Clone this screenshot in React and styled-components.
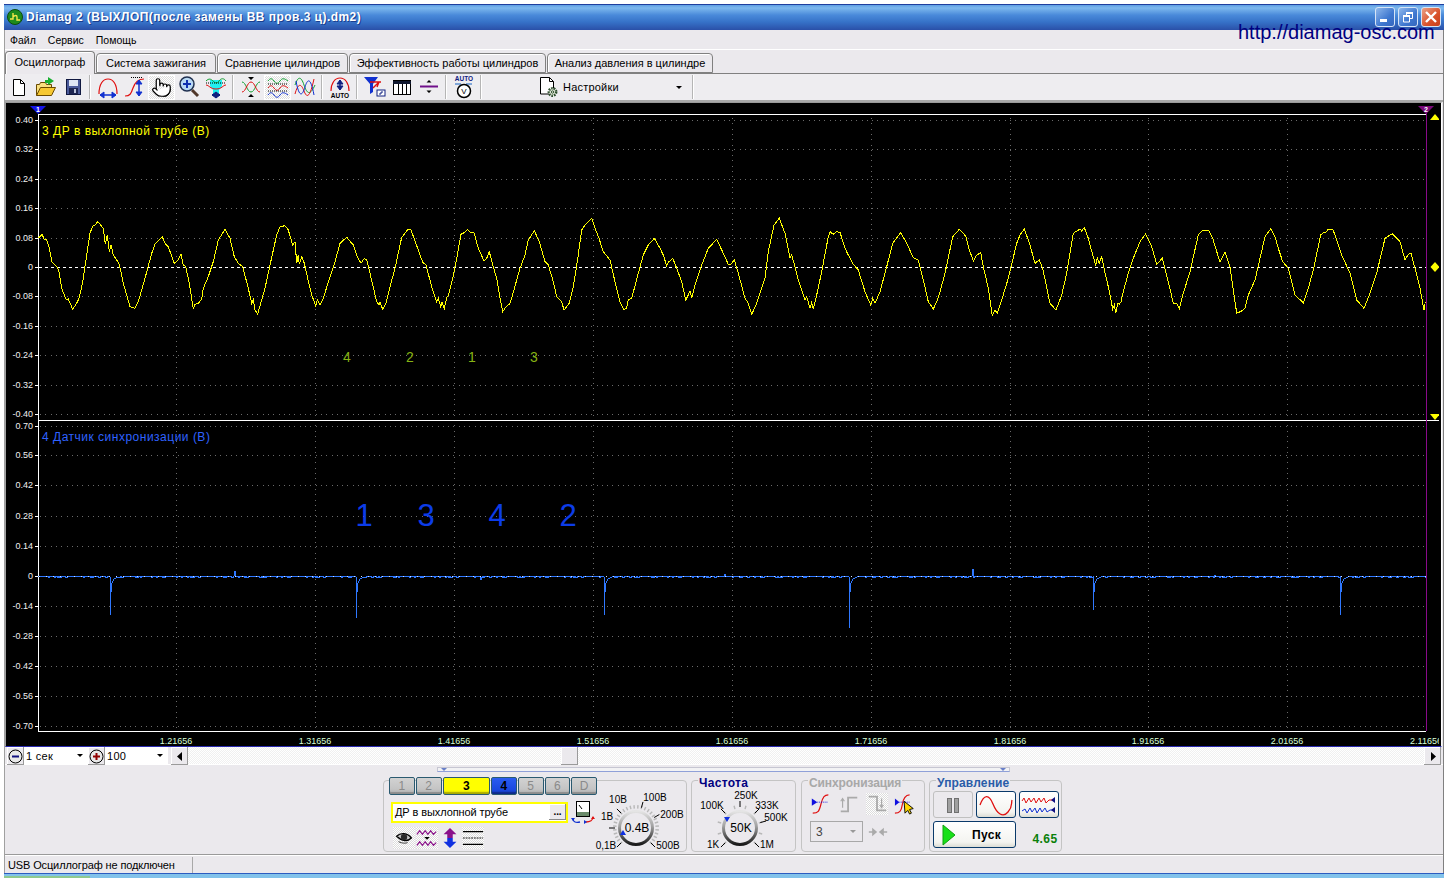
import styled, { createGlobalStyle } from "styled-components";
import { Pointer } from "lucide-react";

const GlobalStyle = createGlobalStyle`
  html, body {
    margin: 0;
    padding: 0;
    background: #fff;
  }
  * {
    box-sizing: border-box;
  }
  body {
    font-family: "Liberation Sans", Arial, sans-serif;
    font-size: 11px;
    color: #000;
  }
`;

const Page = styled.div`
  width: 1448px;
  height: 878px;
  padding: 4px 4px 0;
  display: flex;
  flex-direction: column;
  background: #fff;
  overflow: hidden;
`;

const Window = styled.div`
  position: relative;
  flex: 1;
  min-height: 0;
  display: flex;
  flex-direction: column;
  background: #ebe9ed;
  border-right: 1px solid #808080;
  border-left: 1px solid #a0a0a0;
`;

const TitleBar = styled.div`
  height: 26px;
  margin: 0 -1px;
  flex: none;
  display: flex;
  align-items: center;
  padding: 0 3px 1px 3px;
  border-top: 1px solid #1f3f9e;
  background: linear-gradient(#5f9fe4 0, #7db8ee 3px, #4a8ada 10px, #3672c8 17px, #2a50a8 25px);
`;

const TitleText = styled.span`
  margin-left: 3px;
  color: #fff;
  font-weight: bold;
  font-size: 12px;
  letter-spacing: 0.46px;
  text-shadow: 1px 1px 0 #1a3f8f;
`;

const WindowButtons = styled.div`
  margin-left: auto;
  display: flex;
  gap: 3px;
`;

const WindowButton = styled.div`
  width: 20px;
  height: 20px;
  display: flex;
  align-items: center;
  justify-content: center;
  border: 1px solid #d6e4f6;
  border-radius: 3px;
  background: ${(p) =>
    p.$close
      ? "linear-gradient(135deg, #eba187, #d9512a 60%, #c8401c)"
      : "linear-gradient(135deg, #8fb8ec, #3f78d0 60%, #3567bd)"};
`;

const UrlLabel = styled.div`
  position: absolute;
  top: 17px;
  left: 1233px;
  color: #000080;
  font-size: 20px;
  white-space: nowrap;
`;

const MenuBar = styled.div`
  height: 20px;
  flex: none;
  display: flex;
  align-items: center;
  gap: 12px;
  padding-left: 5px;
  border-bottom: 1px solid #fff;
`;

const MenuItem = styled.span`
  font-size: 10.5px;
`;

const TabRow = styled.div`
  height: 24px;
  flex: none;
  display: flex;
  align-items: flex-end;
  gap: 1px;
  border-bottom: 1px solid #808080;
`;

const Tab = styled.div`
  height: ${(p) => (p.$active ? "23px" : "20px")};
  width: ${(p) => p.$w}px;
  margin-bottom: ${(p) => (p.$active ? "-1px" : "0")};
  padding-bottom: ${(p) => (p.$active ? "2px" : "1px")};
  display: flex;
  align-items: center;
  justify-content: center;
  border: 1px solid #808080;
  border-bottom: ${(p) => (p.$active ? "none" : "1px solid #808080")};
  border-radius: 4px 4px 0 0;
  background: #ebe9ed;
  box-shadow: inset 1px 1px 0 #fff;
  font-size: 11px;
  white-space: nowrap;
  position: relative;
`;

const Toolbar = styled.div`
  height: 28px;
  flex: none;
  display: flex;
  align-items: center;
  background: #eeedf0;
  border-bottom: 2px solid #a8a8a8;
`;

const ToolButton = styled.div`
  width: 27px;
  height: 25px;
  display: flex;
  align-items: center;
  justify-content: center;
  border: 1px solid ${(p) => (p.$on ? "#fff" : "transparent")};
  background: ${(p) =>
    p.$on ? "repeating-conic-gradient(#dcdcdc 0 25%, #fff 0 50%) 0 0/2px 2px" : "transparent"};
`;

const ToolSep = styled.div`
  width: 1px;
  height: 24px;
  flex: none;
  margin: 0 4px 0 3px;
  background: #b5b5b5;
  box-shadow: 1px 0 0 #fff;
`;

const SettingsBox = styled.div`
  width: 152px;
  margin-left: 52px;
  display: flex;
  align-items: center;
  gap: 2px;
  font-size: 11px;
  letter-spacing: 0.2px;
`;

const DownArrow = styled.span`
  width: 0;
  height: 0;
  margin-left: auto;
  margin-right: ${(p) => p.$mr || 7}px;
  border-left: 3px solid transparent;
  border-right: 3px solid transparent;
  border-top: 3px solid ${(p) => p.$color || "#000"};
`;

const Scope = styled.div`
  height: 645px;
  flex: none;
  margin: 0 1px 0 0;
  display: flex;
  flex-direction: column;
  background: #000;
  border-top: 1px solid #9a9a9a;
  border-left: 1px solid #a0a0a0;
  border-right: 1px solid #fff;
  border-bottom: 1px solid #2a2ab0;
`;

const ScopeSvg = styled.svg`
  display: block;
  flex: none;
  font-family: "Liberation Sans", Arial, sans-serif;
`;

const ScrollRow = styled.div`
  height: 18px;
  flex: none;
  display: flex;
  padding: 0 2px;
  border-bottom: 1px solid #fff;
`;

const RoundBtn = styled.div`
  width: 17px;
  height: 18px;
  flex: none;
  display: flex;
  align-items: center;
  justify-content: center;
  background: #ebe9ed;
  box-shadow: inset -1px -1px 0 #9a9a9a, inset 1px 1px 0 #fff;
`;

const ZoomCombo = styled.div`
  width: ${(p) => p.$w}px;
  display: flex;
  align-items: center;
  padding-left: 2px;
  background: #fff;
  font-size: 11px;
  letter-spacing: 0.3px;
`;

const ScrollTrack = styled.div`
  position: relative;
  flex: 1;
  margin-left: 3px;
  display: flex;
  justify-content: space-between;
  background: repeating-conic-gradient(#f0f0f0 0 25%, #fff 0 50%) 0 0/2px 2px;
`;

const ScrollThumb = styled.div`
  position: absolute;
  top: 0;
  left: 390px;
  width: 17px;
  height: 18px;
  background: #ebe9ed;
  box-shadow: inset -1px -1px 0 #9a9a9a, inset 1px 1px 0 #fff;
`;

const GripBar = styled.div`
  position: relative;
  width: 573px;
  height: 5px;
  flex: none;
  margin: 2px 0 0 432px;
  border: 1px solid #c6c6d2;
  border-bottom-color: #8fa0d8;
  background: #f2f2f4;
  &::before,
  &::after {
    content: "";
    position: absolute;
    top: 0;
    border-top: 3px solid #6a80c8;
    border-left: 3px solid transparent;
    border-right: 3px solid transparent;
  }
  &::before {
    left: 3px;
  }
  &::after {
    right: 3px;
  }
`;

const ControlsArea = styled.div`
  flex: 1;
  min-height: 0;
  display: flex;
  align-items: flex-end;
  gap: 4px;
  padding: 0 0 2px 378px;
`;

const Panel = styled.div`
  position: relative;
  width: ${(p) => p.$w}px;
  height: 72px;
  flex: none;
  display: flex;
  margin-left: ${(p) => p.$ml || 0}px;
  border: 1px solid #c4c4c4;
  border-radius: 4px;
  background: #ebe9ed;
`;

const Legend = styled.div`
  position: absolute;
  top: -4px;
  left: 6px;
  padding: 0 1px;
  background: #ebe9ed;
  font-size: 12px;
  line-height: 13px;
  font-weight: bold;
  letter-spacing: ${(p) => p.$ls ?? 0.3}px;
  color: ${(p) => p.$color};
`;

const ChannelColumn = styled.div`
  width: 208px;
  flex: none;
  margin-left: 5px;
  display: flex;
  flex-direction: column;
`;

const ChannelTabs = styled.div`
  margin-top: -4px;
  display: flex;
  gap: 1px;
`;

const ChannelBtn = styled.div`
  width: ${(p) => (p.$wide ? 48 : 26)}px;
  height: 18px;
  display: flex;
  align-items: center;
  justify-content: center;
  border: 1px solid #2a5a70;
  border-radius: 2px;
  font-size: 12px;
  font-weight: ${(p) => (p.$bg ? "bold" : "normal")};
  color: ${(p) => (p.$bg ? "#000" : "#8a8a8a")};
  background: ${(p) => p.$bg || "linear-gradient(#d2d2d2, #c4c4c4 70%, #a8a8a8)"};
  box-shadow: inset 0 -2px 0 rgba(0, 0, 0, 0.18);
`;

const NameRow = styled.div`
  margin: 5px 0 0 2px;
  display: flex;
  align-items: center;
  gap: 3px;
`;

const NameField = styled.div`
  width: 177px;
  height: 21px;
  display: flex;
  align-items: center;
  padding-left: 2px;
  border: 2px solid #ffff00;
  background: #fff;
  font-size: 11px;
  letter-spacing: -0.1px;
`;

const DotsBtn = styled.div`
  width: 17px;
  height: 16px;
  margin-left: auto;
  display: flex;
  align-items: center;
  justify-content: center;
  background: #ebe9ed;
  box-shadow: inset -1px -1px 0 #8a8a8a, inset 1px 1px 0 #fff;
  font-size: 10px;
  font-weight: bold;
  line-height: 8px;
`;

const ViewRow = styled.div`
  margin: 3px 0 0 4px;
  display: flex;
  gap: 1px;
`;

const ViewBtn = styled.div`
  width: 22px;
  height: 22px;
  display: flex;
  align-items: center;
  justify-content: center;
  background: ${(p) =>
    p.$on ? "repeating-conic-gradient(#dcdcdc 0 25%, #fff 0 50%) 0 0/2px 2px" : "transparent"};
`;

const KnobSvg = styled.svg`
  display: block;
  flex: none;
  align-self: flex-end;
  margin-bottom: -1px;
  overflow: visible;
  font-family: "Liberation Sans", Arial, sans-serif;
`;

const SyncGrid = styled.div`
  padding: 12px 0 0 8px;
  display: flex;
  flex-direction: column;
  gap: 6px;
`;

const SyncIcons = styled.div`
  display: flex;
  gap: 6px;
`;

const SyncBtn = styled.div`
  width: 22px;
  height: 22px;
  display: flex;
  align-items: center;
  justify-content: center;
  background: ${(p) =>
    p.$on ? "repeating-conic-gradient(#dcdcdc 0 25%, #fff 0 50%) 0 0/2px 2px" : "transparent"};
`;

const SyncRow = styled.div`
  display: flex;
  align-items: center;
  gap: 5px;
`;

const SyncSelect = styled.div`
  width: 53px;
  height: 21px;
  display: flex;
  align-items: center;
  padding-left: 5px;
  border: 1px solid #a8a8a8;
  font-size: 12px;
  color: #444;
`;

const ControlGrid = styled.div`
  padding: 10px 0 0 3px;
  display: grid;
  grid-template-columns: 40px 40px 40px;
  grid-template-rows: 27px 27px;
  gap: 3px;
`;

const CtlBtn = styled.div`
  display: flex;
  align-items: center;
  justify-content: center;
  border: ${(p) => (p.$off ? "1px solid #c0c0c0" : "1px solid #0a3a6a")};
  border-radius: 3px;
  background: ${(p) => (p.$off ? "#ebe9ed" : "linear-gradient(#fff, #f4f4f0 80%, #dcdcd4)")};
`;

const StartBtn = styled(CtlBtn)`
  grid-column: span 2;
  justify-content: flex-start;
  padding-left: 8px;
`;

const StartLabel = styled.span`
  margin-left: 16px;
  font-size: 12px;
  font-weight: bold;
  letter-spacing: 0.4px;
`;

const Voltage = styled.div`
  display: flex;
  align-items: center;
  justify-content: center;
  padding: 8px 0 0 12px;
  color: #0a800a;
  font-size: 12px;
  font-weight: bold;
  letter-spacing: 0.4px;
`;

const StatusBar = styled.div`
  height: 19px;
  flex: none;
  display: flex;
  gap: 3px;
  border-top: 1px solid #9a9a9a;
  box-shadow: inset 0 1px 0 #fff;
  padding-top: 2px;
`;

const StatusCell = styled.div`
  width: ${(p) => p.$w}px;
  display: flex;
  align-items: center;
  padding-left: 3px;
  border-right: 1px solid #a8a8a8;
  font-size: 11px;
  letter-spacing: -0.13px;
`;

const Taskbar = styled.div`
  position: relative;
  height: 5px;
  flex: none;
  border-top: 1px solid #2c5cc0;
  background: #82c2ea;
`;

const StartEdge = styled.div`
  position: absolute;
  left: 0;
  bottom: 0;
  width: 86px;
  height: 2px;
  background: #8fc98f;
`;

// точки снятые с осциллограммы, [начало участка, предел, x*3 y*3]
const TRACE_PARTS = [
  [30, 1410, "25,100 36,88 43,103 50,104 58,130 66,170 72,178 80,184 87,200 95,250 108,283 115,282 128,313 140,295 148,278 158,230 170,150 180,85 188,63 195,60 203,50 210,58 220,70 226,118 232,90 238,140 243,120 250,150 258,162 268,178 280,235 300,305 315,310 325,290 345,220 365,145 375,118 385,108 397,95 405,115 415,125 433,175 442,168 453,148 460,180 467,185 478,235 490,312 495,298 505,295 515,283 520,250 535,215 550,170 565,105 585,73 600,100 613,155 625,175 638,185 655,250 665,295 670,285 675,315 683,327 695,285 705,250 720,180 740,90 750,65 765,62 775,75 788,120 795,110 800,175 805,150 808,178 815,155 823,175 832,215 845,270 857,302 862,285 870,300 880,280 900,215 915,170 930,115 950,97 970,120 982,155 993,175 1003,160 1010,165 1020,205 1040,290 1047,300 1050,292 1058,313 1068,295 1080,245 1095,190 1115,97 1125,85 1135,72 1143,75 1152,100 1165,135 1178,172 1188,180 1205,245 1220,290 1225,280 1232,305 1236,292 1243,310 1250,278 1255,272 1270,212 1280,160 1293,88 1305,82 1313,73 1320,82 1332,83 1345,130 1362,168 1370,160 1378,140 1388,180 1400,220"],
  [500, 1378, "0,278 8,320 15,310 30,295 40,262 60,190 75,150 85,105 103,77 118,110 135,170 145,180 160,230 170,275 185,290 192,315 208,295 220,245 232,170 245,75 255,60 265,50 275,40 285,70 297,100 310,140 330,165 345,230 360,290 372,315 380,308 385,285 395,280 415,205 430,150 445,120 463,100 480,130 490,150 500,183 505,172 518,160 530,190 545,230 557,285 565,270 570,258 575,280 585,240 605,180 625,130 650,103 670,145 685,178 693,178 703,165 715,205 735,280 745,295 755,328 770,295 780,265 795,220 805,140 822,60 838,40 855,85 870,160 875,150 882,175 895,225 915,285 920,275 930,310 935,292 940,312 950,270 965,200 985,95 990,80 1000,88 1010,80 1020,82 1035,130 1045,150 1060,178 1075,195 1095,260 1112,300 1118,280 1125,295 1140,260 1160,185 1178,115 1202,83 1220,115 1240,158 1255,165 1270,225 1285,290 1300,312 1310,290 1320,260 1335,205 1358,95 1378,73"],
  [960, 9999, "10,85 18,95 25,125 40,168 50,150 62,143 70,185 85,250 97,332 105,315 112,325 122,295 145,220 170,115 180,90 193,73 207,110 225,175 238,165 248,190 270,295 288,315 305,270 320,205 340,85 360,72 365,78 373,68 385,100 398,150 407,180 412,160 418,175 425,155 432,190 445,245 458,312 463,300 467,325 473,295 478,298 483,290 490,260 505,205 520,160 540,110 557,87 575,125 590,178 607,160 625,230 640,295 650,295 658,312 670,265 690,200 715,90 730,75 745,75 758,100 780,172 795,140 810,185 830,325 845,318 855,310 865,270 885,225 915,95 932,72 945,95 955,130 968,170 985,190 1005,270 1030,293 1045,250 1060,195 1082,90 1090,83 1100,80 1105,72 1118,72 1125,90 1145,150 1170,205 1190,285 1212,310 1230,265 1250,205 1275,100 1297,86 1320,110 1335,165 1345,148 1353,145 1365,190 1380,250 1392,315 1396,290"],
];

const yellowTrace = TRACE_PARTS.flatMap(([x0, limit, s]) =>
  s
    .split(" ")
    .map((p) => p.split(",").map(Number))
    .filter(([zx]) => zx <= limit)
    .map(([zx, zy]) => `${(x0 + zx / 3).toFixed(1)},${(205 + zy / 3).toFixed(1)}`)
).join(" ");

// датчик синхронизации: ровная линия с короткими провалами
const SPIKES = [
  [110, 615],
  [356, 618],
  [604, 615],
  [849, 628],
  [1093, 610],
  [1340, 615],
];
const BUMPS = { 235: 571, 481: 580, 725: 574, 973: 569, 1215: 575 };

const makeBlueTrace = () => {
  const pts = [];
  let seed = 7;
  for (let x = 38; x <= 1426; x += 1) {
    seed = (seed * 137 + 11) % 251;
    const spike = SPIKES.find(([sx]) => sx === x);
    if (spike) {
      pts.push(`${x},577`, `${x},${spike[1]}`, `${x + 1},592`, `${x + 2},583`, `${x + 4},579`, `${x + 8},577`);
      x += 8;
      continue;
    }
    pts.push(`${x},${BUMPS[x] || 576.5 + (seed % 5 === 0 ? 1 : 0)}`);
  }
  return pts.join(" ");
};

const V_GRID = [176, 315, 454, 593, 732, 871, 1010, 1148, 1287];
const TIME_LABELS = [
  "1.21656", "1.31656", "1.41656", "1.51656", "1.61656", "1.71656", "1.81656", "1.91656", "2.01656",
];

const CH1_TICKS = [
  ["0.40", 120], ["0.32", 149], ["0.24", 179], ["0.16", 208], ["0.08", 238], ["0", 267],
  ["-0.08", 296], ["-0.16", 326], ["-0.24", 355], ["-0.32", 385], ["-0.40", 414],
];
const CH2_TICKS = [
  ["0.70", 426], ["0.56", 455], ["0.42", 485], ["0.28", 516], ["0.14", 546], ["0", 576],
  ["-0.14", 606], ["-0.28", 636], ["-0.42", 666], ["-0.56", 696], ["-0.70", 726],
];

const Grid = ({ ticks, top, bottom, zeroDash }) => (
  <g shapeRendering="crispEdges">
    {ticks.map(([label, y]) => (
      <g key={label}>
        <line x1="35" x2="38" y1={y} y2={y} stroke="#fff" />
        <text x="33" y={y + 3} textAnchor="end" fontSize="9" fill="#f0f0f0">
          {label}
        </text>
        {label === "0" ? (
          zeroDash && <line x1="39" x2="1426" y1={y} y2={y} stroke="#fff" strokeDasharray="3 3" />
        ) : (
          <line x1="40" x2="1426" y1={y} y2={y} stroke="#6a6a6a" strokeDasharray="1 4.3" />
        )}
      </g>
    ))}
    {V_GRID.map((x) => (
      <line key={x} x1={x} x2={x} y1={top} y2={bottom} stroke="#6a6a6a" strokeDasharray="1 4.3" />
    ))}
  </g>
);

const CursorFlag = ({ x, color, n }) => (
  <g>
    <polygon points={`${x - 8},106 ${x + 8},106 ${x},114`} fill={color} />
    <text x={x} y="112" textAnchor="middle" fontSize="7" fontWeight="bold" fill="#fff">
      {n}
    </text>
  </g>
);

const Channel1 = () => (
  <ScopeSvg width="1433" height="317" viewBox="6 103 1433 317">
    <Grid ticks={CH1_TICKS} top={118} bottom={420} zeroDash />
    <g shapeRendering="crispEdges">
      <line x1="38" x2="1426" y1="114.5" y2="114.5" stroke="#fff" />
      <line x1="38.5" x2="38.5" y1="114" y2="420" stroke="#fff" />
      <line x1="1426.5" x2="1426.5" y1="112" y2="420" stroke="#8a0a8a" />
      <polyline points={yellowTrace} fill="none" stroke="#ffff00" strokeWidth="1" />
    </g>
    <CursorFlag x={38} color="#1414e6" n="1" />
    <CursorFlag x={1426} color="#7a0a7a" n="2" />
    <polygon points="1430,120 1440,120 1435,114" fill="#ffff00" />
    <polygon points="1435,262 1439.5,267 1435,272 1430.5,267" fill="#ffff00" />
    <polygon points="1430,414 1440,414 1435,420" fill="#ffff00" />
    <text x="42" y="135" fontSize="12" letterSpacing="0.5" fill="#ffff00">
      3 ДР в выхлопной трубе (В)
    </text>
    {[["4", 347], ["2", 410], ["1", 472], ["3", 534]].map(([n, x]) => (
      <text key={x} x={x} y="362" textAnchor="middle" fontSize="14" fill="#86b414">
        {n}
      </text>
    ))}
  </ScopeSvg>
);

const Channel2 = () => (
  <ScopeSvg width="1433" height="312" viewBox="6 420 1433 312">
    <Grid ticks={CH2_TICKS} top={420} bottom={731} />
    <g shapeRendering="crispEdges">
      <line x1="38" x2="1440" y1="420.5" y2="420.5" stroke="#fff" />
      <line x1="38.5" x2="38.5" y1="420" y2="731" stroke="#fff" />
      <line x1="38" x2="1426" y1="731.5" y2="731.5" stroke="#fff" />
      <line x1="1426.5" x2="1426.5" y1="420" y2="731" stroke="#8a0a8a" />
      <polyline points={makeBlueTrace()} fill="none" stroke="#2f78ff" strokeWidth="1" />
      <line x1="39" x2="1426" y1="576.500" y2="576.500" stroke="#cfe0ff" strokeDasharray="1 6" />
    </g>
    <text x="42" y="441" fontSize="12" letterSpacing="0.5" fill="#2f62ff">
      4 Датчик синхронизации (В)
    </text>
    {[["1", 364], ["3", 426], ["4", 497], ["2", 568]].map(([n, x]) => (
      <text key={x} x={x} y="526" textAnchor="middle" fontSize="31" fill="#0c3ce8">
        {n}
      </text>
    ))}
  </ScopeSvg>
);

const TimeAxis = () => (
  <ScopeSvg width="1433" height="14" viewBox="6 732 1433 14">
    {V_GRID.map((x, i) => (
      <text key={x} x={x} y="744" textAnchor="middle" fontSize="9" fill="#d8ffd8">
        {TIME_LABELS[i]}
      </text>
    ))}
    <text x="1426" y="744" textAnchor="middle" fontSize="9" fill="#d8ffd8">
      2.11656
    </text>
  </ScopeSvg>
);

const Ico = ({ s = 24, children }) => (
  <svg width={s} height={s} viewBox="0 0 24 24" style={{ display: "block" }}>
    {children}
  </svg>
);

const ArrowH = ({ y, x1, x2, c = "#1030d0" }) => (
  <g stroke={c} fill={c}>
    <line x1={x1} x2={x2} y1={y} y2={y} strokeWidth="1.5" />
    <polygon points={`${x1},${y} ${x1 + 4},${y - 3} ${x1 + 4},${y + 3}`} />
    <polygon points={`${x2},${y} ${x2 - 4},${y - 3} ${x2 - 4},${y + 3}`} />
  </g>
);

const ArrowV = ({ x, y1, y2, c = "#1030d0" }) => (
  <g stroke={c} fill={c}>
    <line x1={x} x2={x} y1={y1} y2={y2} strokeWidth="1.5" />
    <polygon points={`${x},${y1} ${x - 3},${y1 + 4} ${x + 3},${y1 + 4}`} />
    <polygon points={`${x},${y2} ${x - 3},${y2 - 4} ${x + 3},${y2 - 4}`} />
  </g>
);

const NewIcon = () => (
  <Ico>
    <path d="M6.5 4.5h7l4 4v12h-11z" fill="#fff" stroke="#000" />
    <path d="M13.5 4.5v4h4" fill="none" stroke="#000" />
  </Ico>
);
const OpenIcon = () => (
  <Ico>
    <path d="M2.5 20.5V9.5h3l1-2h5l1 2h5v3" fill="#f8e080" stroke="#6a4a00" />
    <path d="M2.5 20.5l4-8h15l-4 8z" fill="#f6c832" stroke="#6a4a00" />
    <path d="M14 2l6 4-6 4V8h-3V5h3z" fill="#18b030" />
  </Ico>
);
const SaveIcon = () => (
  <Ico>
    <rect x="5.5" y="4.5" width="14" height="15" fill="#4a5a9a" stroke="#101840" />
    <rect x="8" y="5" width="9" height="6" fill="#dfe6f4" />
    <rect x="8" y="13" width="9" height="6" fill="#1c2450" />
    <rect x="13" y="14" width="2" height="4" fill="#b8c0d8" />
  </Ico>
);
const ArcWidthIcon = () => (
  <Ico>
    <path d="M3 19C3 9 7 4 12 4s9 5 9 15" fill="none" stroke="#e01010" strokeWidth="1.2" />
    <ArrowH y={20} x1={4} x2={20} />
  </Ico>
);
const ArcHeightIcon = () => (
  <Ico>
    <path d="M2 21c5 0 6-2 8-8s5-9 11-9" fill="none" stroke="#e01010" strokeWidth="1.2" />
    <line x1="8" x2="20" y1="2.5" y2="2.500" stroke="#000" strokeDasharray="1 1" />
    <ArrowV x={16} y1={5} y2={21} />
  </Ico>
);
const ZoomIcon = () => (
  <Ico>
    <line x1="15" y1="15" x2="21" y2="21" stroke="#50382a" strokeWidth="3" />
    <circle cx="10" cy="9" r="7" fill="#b8d8f4" stroke="#203050" strokeWidth="1.5" />
    <path d="M6 9h8M10 5v8" stroke="#1030b0" strokeWidth="2" />
  </Ico>
);
const ScaleIcon = () => (
  <Ico>
    <path d="M6 5h12v6l-3 4v6H9v-6L6 11z" fill="#22f0f0" />
    <path d="M2 6c3-3 5-2 7 0s4 3 6 0 5-3 7 0" fill="none" stroke="#10a030" />
    <path d="M2 10c3 0 4 4 10 4s7-4 10-4" fill="none" stroke="#e01010" />
    <line x1="2" x2="22" y1="8" y2="8" stroke="#000" strokeDasharray="1 1" />
    <ArrowH y={20} x1={8} x2={16} c="#102080" />
  </Ico>
);
const CrossIcon = () => (
  <Ico>
    <path d="M3 7c4 0 5 10 9 10s5-10 9-10" fill="none" stroke="#10a030" />
    <path d="M3 17c4 0 5-10 9-10s5 10 9 10" fill="none" stroke="#e01010" />
    <path d="M9 2h6l-3 3zM9 22h6l-3-3z" fill="#000" />
  </Ico>
);
const RowsIcon = () => (
  <Ico>
    <g fill="none">
      <path d="M2 6c2-3 4-3 6 0s4 3 6 0 4-3 8 0" stroke="#10a030" />
      <path d="M2 13c2-3 4-3 6 0s4 3 6 0 4-3 8 0" stroke="#e01010" />
      <path d="M2 20c2-3 4-3 6 0s4 3 6 0 4-3 8 0" stroke="#1030d0" />
    </g>
    <path d="M2 9h20M2 16h20" stroke="#000" strokeDasharray="1 1" />
  </Ico>
);
const OverlayIcon = () => (
  <Ico>
    <g fill="none">
      <path d="M2 10C5 1 8 1 11 10s6 11 11 0" stroke="#10a030" />
      <path d="M2 19C5 8 8 8 11 16s6 6 10-12" stroke="#e01010" />
      <path d="M3 6c3 16 6 16 9 6s6-8 9 8" stroke="#1030d0" />
    </g>
  </Ico>
);
const AutoIcon = () => (
  <Ico>
    <path d="M3 16C3 8 7 3 12 3s9 5 9 13" fill="none" stroke="#e01010" strokeWidth="1.2" />
    <ArrowV x={12} y1={5} y2={15} c="#102080" />
    <text x="12" y="22.5" textAnchor="middle" fontSize="6.5" fontWeight="bold" fontFamily="Liberation Sans">AUTO</text>
  </Ico>
);
const FilterIcon = () => (
  <Ico>
    <path d="M1 2h14L10 9v8l-3 2V9z" fill="#1030d0" />
    <path d="M7 7h11M10 13l6-6-2 5" fill="none" stroke="#e01010" strokeWidth="1.4" />
    <rect x="14" y="15" width="8" height="6" fill="#fff" stroke="#102080" />
    <path d="M16 19h2v-2h2" fill="none" stroke="#102080" />
  </Ico>
);
const TableIcon = () => (
  <Ico>
    <rect x="3.5" y="5.5" width="17" height="14" fill="#fff" stroke="#000" />
    <path d="M3 6h18v3H3z" fill="#101830" />
    <path d="M8.5 9v10M12.5 9v10M16.5 9v10" stroke="#000" />
  </Ico>
);
const LevelIcon = () => (
  <Ico>
    <path d="M3 11.500h18" stroke="#70108a" strokeWidth="2" />
    <path d="M9.5 7.500h5L12 5zM9.5 15.500h5L12 18z" fill="#000" />
  </Ico>
);
const GaugeIcon = () => (
  <Ico>
    <text x="12" y="6" textAnchor="middle" fontSize="6.5" fontWeight="bold" fill="#102080" fontFamily="Liberation Sans">AUTO</text>
    <path d="M3 9h18" stroke="#1060c0" strokeWidth="1.2" strokeDasharray="6 5" />
    <circle cx="12" cy="16" r="6.5" fill="#fff" stroke="#000" strokeWidth="1.5" />
    <text x="12" y="19" textAnchor="middle" fontSize="8" fontFamily="Liberation Sans">V</text>
  </Ico>
);
const SettingsIcon = () => (
  <Ico>
    <path d="M3.5 2.500h9l4 4V19h-13z" fill="#fff" stroke="#000" />
    <path d="M12.5 2.500v4h4" fill="none" stroke="#000" />
    <circle cx="15.5" cy="17" r="3.7" fill="#e8f0e0" stroke="#305030" strokeWidth="2.5" strokeDasharray="1.6 1" />
    <circle cx="15.5" cy="17" r="1.2" fill="none" stroke="#305030" />
  </Ico>
);

const MeterIcon = () => (
  <Ico>
    <rect x="5.5" y="1.500" width="13" height="15" fill="#fff" stroke="#000" />
    <path d="M8 5l3 4" stroke="#000" />
    <rect x="6" y="12" width="12" height="4" fill="#6a8a6a" />
    <path d="M2 19c0 3 3 4 7 3" fill="none" stroke="#1030d0" strokeWidth="1.3" />
    <path d="M22 17c0 3-3 5-7 5" fill="none" stroke="#e01010" strokeWidth="1.3" />
    <path d="M0 18h4l-2 3zM13 20v4l3-2z" fill="#1030d0" />
    <path d="M20 19h4l-2-3z" fill="#e01010" />
  </Ico>
);
const EyeIcon = () => (
  <Ico s={22}>
    <path d="M4 10c4-4 12-4 16 2-4 4-10 4-16-2z" fill="#c8c8c8" stroke="#000" strokeWidth="1.5" />
    <circle cx="12" cy="11" r="3.5" fill="#2a2a2a" />
    <path d="M6 16c4 2 8 2 10 1" stroke="#333" fill="none" />
  </Ico>
);
const WaveViewIcon = () => (
  <Ico s={22}>
    <path d="M1 8l3-4 3 4 3-4 3 4 3-4 3 4 3-3" fill="none" stroke="#8a108a" strokeWidth="1.3" />
    <path d="M1 20l3-4 3 4 3-4 3 4 3-4 3 4 3-3" fill="none" stroke="#8a108a" strokeWidth="1.3" />
    <path d="M9 11h6l-3 3z" fill="#000" />
  </Ico>
);
const MoveIcon = () => (
  <Ico s={22}>
    <path d="M12 1l7 7h-4v4H9V8H5z" fill="#8a108a" />
    <path d="M12 23l7-7h-4v-4H9v4H5z" fill="#1030e0" />
  </Ico>
);
const LinesIcon = () => (
  <Ico s={22}>
    <path d="M1 5h22M1 19h22" stroke="#000" strokeWidth="1.2" />
    <path d="M1 12h22" stroke="#000" strokeDasharray="2 1" />
  </Ico>
);
const SlopeUpIcon = () => (
  <Ico s={22}>
    <path d="M3 22c6 0 7-2 9-10s4-10 8-10" fill="none" stroke="#e01010" strokeWidth="1.3" />
    <path d="M2 6l6 4-6 4z" fill="#1010e0" />
    <path d="M8 10h12" stroke="#1010e0" strokeDasharray="1 1" />
  </Ico>
);
const StepUpIcon = () => (
  <Ico s={22}>
    <path d="M3 20h8V5h10" fill="none" stroke="#aaa" strokeWidth="2" />
    <path d="M5 16V7M3 9l2-3 2 3" fill="none" stroke="#aaa" strokeWidth="1.3" />
  </Ico>
);
const StepDownIcon = () => (
  <Ico s={22}>
    <path d="M3 4h9v15h10" fill="none" stroke="#aaa" strokeWidth="2" />
    <path d="M17 6v9M15 13l2 3 2-3" fill="none" stroke="#aaa" strokeWidth="1.3" />
  </Ico>
);
const SlopeCursorIcon = () => (
  <Ico s={22}>
    <path d="M1 22c5 0 7-2 8-9s4-11 8-11" fill="none" stroke="#e01010" strokeWidth="1.3" />
    <path d="M1 6l5 4-5 4z" fill="#1010e0" />
    <path d="M6 10h12" stroke="#1010e0" strokeDasharray="1 1" />
    <path d="M11 9l10 8-4 1 2 4-2 1-2-4-3 3z" fill="#ffd800" stroke="#000" />
  </Ico>
);
const MergeIcon = () => (
  <Ico s={20}>
    <path d="M1 12h7M16 12h7" stroke="#aaa" strokeWidth="2" />
    <path d="M11 12L5 7v10zM13 12l6-5v10z" fill="#aaa" />
  </Ico>
);
const PauseIcon = () => (
  <Ico>
    <rect x="6.5" y="5.500" width="4" height="14" fill="#a0a0a0" stroke="#707070" />
    <rect x="13.5" y="5.500" width="4" height="14" fill="#a0a0a0" stroke="#707070" />
  </Ico>
);
const SineIcon = () => (
  <svg width="34" height="22" viewBox="0 0 34 22" style={{ display: "block" }}>
    <path d="M1 11C5 0 10 0 14 10s10 14 15 8 3-8 4-12" fill="none" stroke="#e01010" strokeWidth="1.3" />
  </svg>
);
const TwoWavesIcon = () => (
  <svg width="36" height="22" viewBox="0 0 36 22" style={{ display: "block" }}>
    <path d="M1 7l2-3 2 5 3-5 2 4 3-4 2 5 3-5 2 4 3-4 2 5 3-3h4" fill="none" stroke="#e01010" />
    <path d="M1 17l3-2 2 4 3-5 2 4 3-4 2 5 3-5 2 4 3-4 2 4 3-2h3" fill="none" stroke="#1030d0" />
    <path d="M34 3v6l-4-3zM34 13v6l-4-3z" fill="#101080" />
  </svg>
);
const PlayIcon = () => (
  <svg width="14" height="22" viewBox="0 0 14 22" style={{ display: "block" }}>
    <path d="M1 1l12 10L1 21z" fill="#18e018" stroke="#10a010" />
  </svg>
);

const polar = (cx, cy, r, deg) => {
  const a = (deg * Math.PI) / 180;
  return [cx + r * Math.cos(a), cy + r * Math.sin(a)];
};

const Knob = ({ box, cx, cy, value, labels, marker, markerUp, id, fine, majors }) => {
  const small = [];
  for (let d = 135; d <= 405; d += fine) small.push(d);
  return (
    <KnobSvg width={box[2]} height={box[3]} viewBox={box.join(" ")}>
      <defs>
        <linearGradient id={id} x1="0" x2="0" y1="0" y2="1">
          <stop offset="0" stopColor="#e4e4e4" />
          <stop offset="0.45" stopColor="#a0a0a0" />
          <stop offset="1" stopColor="#1a1a1a" />
        </linearGradient>
      </defs>
      {small.map((d) => {
        const [x1, y1] = polar(cx, cy, 19.5, d);
        const [x2, y2] = polar(cx, cy, 23, d);
        return <line key={d} x1={x1} y1={y1} x2={x2} y2={y2} stroke="#b8b8b8" strokeWidth="1.4" />;
      })}
      {majors.map((d) => {
        const [x1, y1] = polar(cx, cy, 21, d);
        const [x2, y2] = polar(cx, cy, 27, d);
        return <line key={d} x1={x1} y1={y1} x2={x2} y2={y2} stroke="#000" />;
      })}
      <circle cx={cx} cy={cy} r="16.5" fill="#ebe9ed" stroke={`url(#${id})`} strokeWidth="3" />
      <text x={cx + 1} y={cy + 4} textAnchor="middle" fontSize="12">
        {value}
      </text>
      <polygon
        points={
          markerUp
            ? `${marker[0] - 3},${marker[1] + 2} ${marker[0] + 3},${marker[1] + 2} ${marker[0]},${marker[1] - 3}`
            : `${marker[0] - 3},${marker[1] - 2} ${marker[0] + 3},${marker[1] - 2} ${marker[0]},${marker[1] + 3}`
        }
        fill="#1030e0"
      />
      {labels.map(([t, x, y]) => (
        <text key={t} x={x} y={y + 3} textAnchor="middle" fontSize="10">
          {t}
        </text>
      ))}
    </KnobSvg>
  );
};

const TABS = [
  ["Осциллограф", 90, true],
  ["Система зажигания", 120],
  ["Сравнение цилиндров", 131],
  ["Эффективность работы цилиндров", 197],
  ["Анализ давления в цилиндре", 166],
];

function App() {
  return (
    <Page>
      <GlobalStyle />
      <Window>
        <TitleBar>
          <svg width="16" height="16" viewBox="0 0 16 16" style={{ display: "block" }}>
            <circle cx="8" cy="8" r="7.5" fill="#1e8a1e" stroke="#0c4a0c" />
            <path d="M3 10h3V4M6 8c2-2 4-2 4 0v3h3" fill="none" stroke="#f6e84a" strokeWidth="1.4" />
          </svg>
          <TitleText>Diamag 2 (ВЫХЛОП(после замены ВВ пров.3 ц).dm2)</TitleText>
          <WindowButtons>
            <WindowButton>
              <svg width="12" height="12" viewBox="0 0 12 12">
                <rect x="1" y="8" width="7" height="3" fill="#fff" />
              </svg>
            </WindowButton>
            <WindowButton>
              <svg width="12" height="12" viewBox="0 0 12 12">
                <path d="M1.5 5h6v6h-6zM4.5 4V1.5h6v6H8" fill="none" stroke="#fff" />
                <path d="M1 5h7M4 2h7" stroke="#fff" strokeWidth="2" />
              </svg>
            </WindowButton>
            <WindowButton $close>
              <svg width="14" height="14" viewBox="0 0 14 14">
                <path d="M2 2l10 10M12 2L2 12" stroke="#fff" strokeWidth="2.4" />
              </svg>
            </WindowButton>
          </WindowButtons>
        </TitleBar>
        <UrlLabel>http://diamag-osc.com</UrlLabel>
        <MenuBar>
          <MenuItem>Файл</MenuItem>
          <MenuItem>Сервис</MenuItem>
          <MenuItem>Помощь</MenuItem>
        </MenuBar>
        <TabRow>
          {TABS.map(([label, w, active]) => (
            <Tab key={label} $w={w} $active={active}>
              {label}
            </Tab>
          ))}
        </TabRow>
        <Toolbar>
          <ToolButton><NewIcon /></ToolButton>
          <ToolButton><OpenIcon /></ToolButton>
          <ToolButton><SaveIcon /></ToolButton>
          <ToolSep />
          <ToolButton><ArcWidthIcon /></ToolButton>
          <ToolButton><ArcHeightIcon /></ToolButton>
          <ToolButton $on><Pointer size={21} fill="#fff" color="#000" strokeWidth={1.4} /></ToolButton>
          <ToolButton><ZoomIcon /></ToolButton>
          <ToolButton><ScaleIcon /></ToolButton>
          <ToolSep />
          <ToolButton><CrossIcon /></ToolButton>
          <ToolButton $on><RowsIcon /></ToolButton>
          <ToolButton><OverlayIcon /></ToolButton>
          <ToolSep />
          <ToolButton><AutoIcon /></ToolButton>
          <ToolSep />
          <ToolButton><FilterIcon /></ToolButton>
          <ToolButton><TableIcon /></ToolButton>
          <ToolButton><LevelIcon /></ToolButton>
          <ToolSep />
          <ToolButton><GaugeIcon /></ToolButton>
          <ToolSep />
          <SettingsBox>
            <SettingsIcon />
            Настройки
            <DownArrow />
          </SettingsBox>
          <ToolSep />
        </Toolbar>
        <Scope>
          <Channel1 />
          <Channel2 />
          <TimeAxis />
        </Scope>
        <ScrollRow>
          <RoundBtn>
            <svg width="15" height="15" viewBox="0 0 15 15">
              <circle cx="7.5" cy="7.5" r="6.5" fill="#e8e8e8" stroke="#000" />
              <path d="M4 7.5h7" stroke="#101080" strokeWidth="2" />
            </svg>
          </RoundBtn>
          <ZoomCombo $w={64}>
            1 сек
            <DownArrow $mr={5} />
          </ZoomCombo>
          <RoundBtn>
            <svg width="15" height="15" viewBox="0 0 15 15">
              <circle cx="7.5" cy="7.5" r="6.5" fill="#e8e8e8" stroke="#000" />
              <path d="M4 7.5h7M7.5 4v7" stroke="#900000" strokeWidth="2" />
            </svg>
          </RoundBtn>
          <ZoomCombo $w={63}>
            100
            <DownArrow $mr={5} />
          </ZoomCombo>
          <ScrollTrack>
            <RoundBtn>
              <svg width="8" height="9" viewBox="0 0 8 9">
                <path d="M6 0v9L1 4.500z" fill="#000" />
              </svg>
            </RoundBtn>
            <ScrollThumb />
            <RoundBtn>
              <svg width="8" height="9" viewBox="0 0 8 9">
                <path d="M2 0v9l5-4.500z" fill="#000" />
              </svg>
            </RoundBtn>
          </ScrollTrack>
        </ScrollRow>
        <GripBar />
        <ControlsArea>
          <Panel $w={304}>
            <ChannelColumn>
              <ChannelTabs>
                <ChannelBtn>1</ChannelBtn>
                <ChannelBtn>2</ChannelBtn>
                <ChannelBtn $wide $bg="linear-gradient(#ffff00, #ffff00 75%, #c8c800)">3</ChannelBtn>
                <ChannelBtn $bg="linear-gradient(#2a5cf0, #1a48e0 75%, #1030a0)">4</ChannelBtn>
                <ChannelBtn>5</ChannelBtn>
                <ChannelBtn>6</ChannelBtn>
                <ChannelBtn>D</ChannelBtn>
              </ChannelTabs>
              <NameRow>
                <NameField>
                  ДР в выхлопной трубе
                  <DotsBtn>...</DotsBtn>
                </NameField>
                <MeterIcon />
              </NameRow>
              <ViewRow>
                <ViewBtn $on><EyeIcon /></ViewBtn>
                <ViewBtn $on><WaveViewIcon /></ViewBtn>
                <ViewBtn><MoveIcon /></ViewBtn>
                <ViewBtn $on><LinesIcon /></ViewBtn>
              </ViewRow>
            </ChannelColumn>
            <Knob
              id="gainDial"
              box={[597, 792, 89, 59]}
              cx={636}
              cy={827}
              value="0.4В"
              marker={[623, 832]}
              markerUp
              fine={10}
              majors={[135, 180, 225, 285, 330, 45]}
              labels={[
                ["10В", 618, 799],
                ["100В", 655, 797],
                ["200В", 672, 814],
                ["1В", 607, 816],
                ["0,1В", 606, 845],
                ["500В", 668, 845],
              ]}
            />
          </Panel>
          <Panel $w={105}>
            <Legend $color="#000080">Частота</Legend>
            <Knob
              id="freqDial"
              box={[692, 788, 103, 63]}
              cx={740}
              cy={827}
              value="50K"
              marker={[727, 818]}
              fine={30}
              majors={[45, 135, 225, 270, 315, 345]}
              labels={[
                ["100K", 712, 805],
                ["250K", 746, 795],
                ["333K", 767, 805],
                ["500K", 776, 817],
                ["1K", 713, 844],
                ["1M", 767, 844],
              ]}
            />
          </Panel>
          <Panel $w={124} $ml={1}>
            <Legend $color="#a8a8a8" $ls={-0.1}>Синхронизация</Legend>
            <SyncGrid>
              <SyncIcons>
                <SyncBtn><SlopeUpIcon /></SyncBtn>
                <SyncBtn><StepUpIcon /></SyncBtn>
                <SyncBtn $on><StepDownIcon /></SyncBtn>
                <SyncBtn><SlopeCursorIcon /></SyncBtn>
              </SyncIcons>
              <SyncRow>
                <SyncSelect>
                  3
                  <DownArrow $mr={6} $color="#999" />
                </SyncSelect>
                <MergeIcon />
              </SyncRow>
            </SyncGrid>
          </Panel>
          <Panel $w={133}>
            <Legend $color="#2a5ca8" $ls={0.15}>Управление</Legend>
            <ControlGrid>
              <CtlBtn $off><PauseIcon /></CtlBtn>
              <CtlBtn><SineIcon /></CtlBtn>
              <CtlBtn><TwoWavesIcon /></CtlBtn>
              <StartBtn>
                <PlayIcon />
                <StartLabel>Пуск</StartLabel>
              </StartBtn>
              <Voltage>4.65</Voltage>
            </ControlGrid>
          </Panel>
        </ControlsArea>
        <StatusBar>
          <StatusCell $w={188}>USB Осциллограф не подключен</StatusCell>
        </StatusBar>
      </Window>
      <Taskbar>
        <StartEdge />
      </Taskbar>
    </Page>
  );
}

export default App;
